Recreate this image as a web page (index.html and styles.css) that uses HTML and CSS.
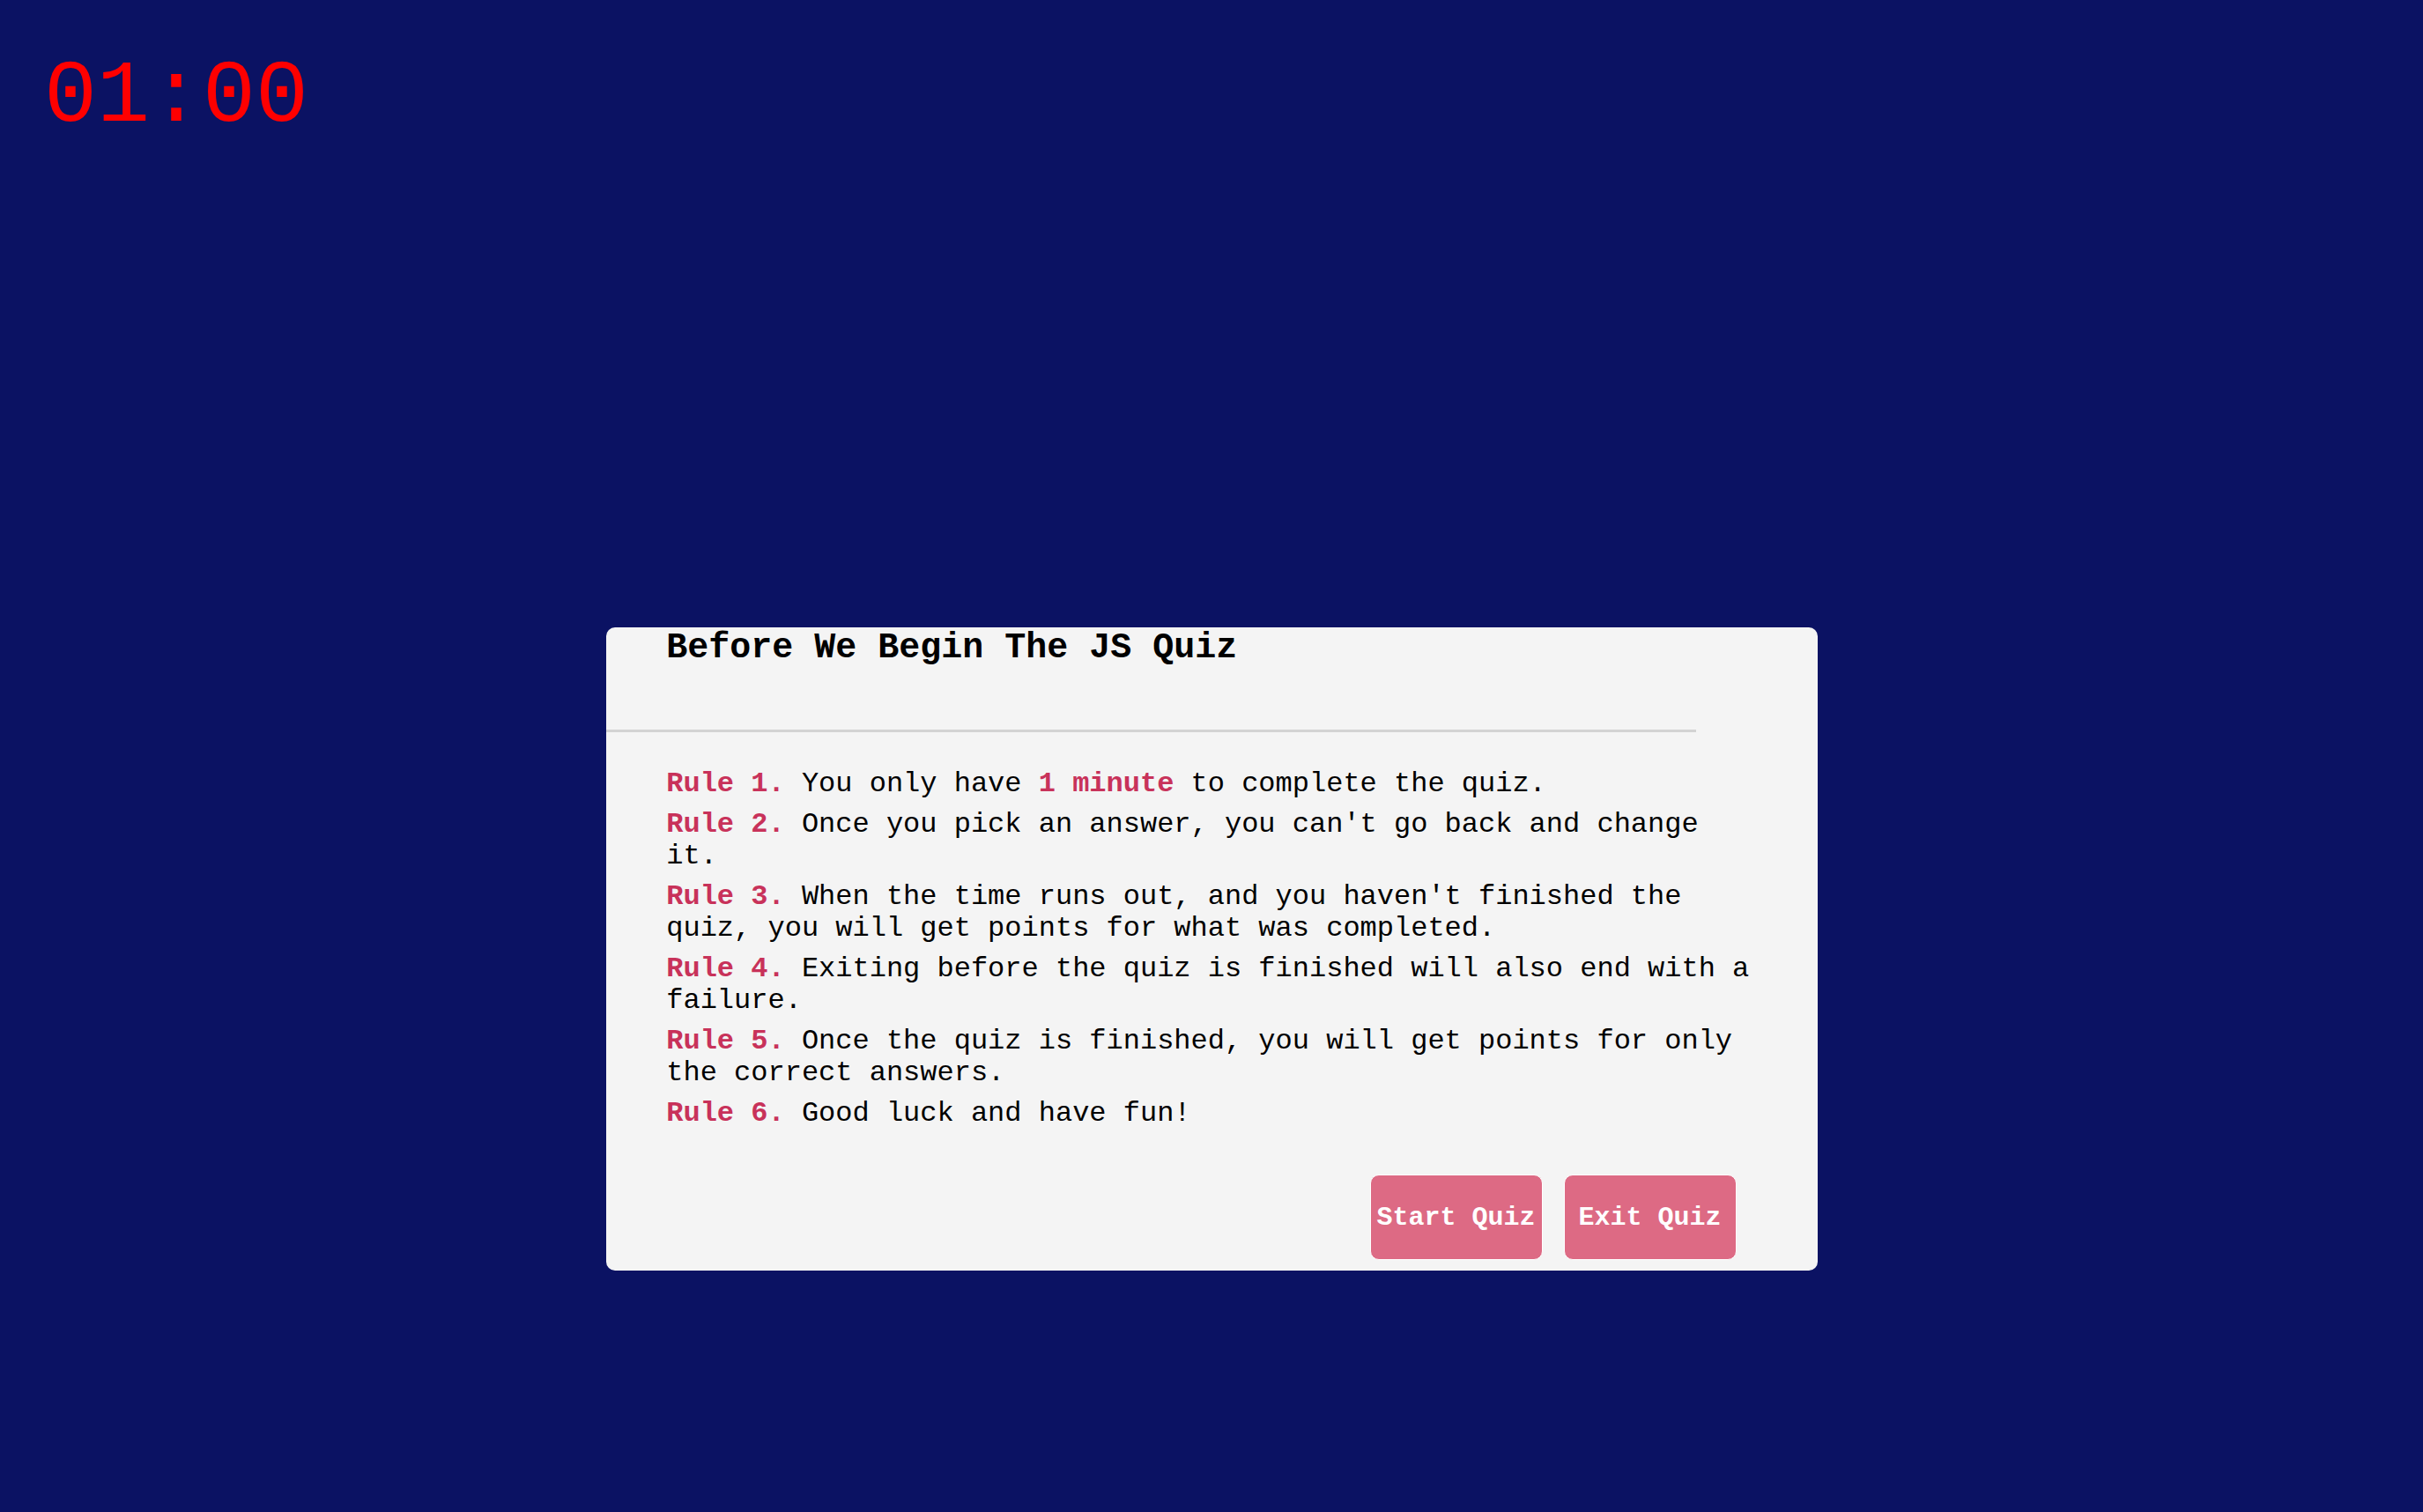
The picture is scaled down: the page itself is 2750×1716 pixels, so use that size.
FILE: index.html
```html
<!DOCTYPE html>
<html lang="en">
<head>
<meta charset="utf-8">
<title>JS Quiz</title>
<link rel="stylesheet" href="styles.css">
</head>
<body>
<div class="timer">01:00</div>
<div class="info-box">
  <div class="info-title">Before We Begin The JS Quiz</div>
  <div class="info-list">
    <div class="rule"><span class="hl">Rule 1.</span> You only have <span class="hl">1 minute</span> to complete the quiz.</div>
    <div class="rule"><span class="hl">Rule 2.</span> Once you pick an answer, you can't go back and change it.</div>
    <div class="rule"><span class="hl">Rule 3.</span> When the time runs out, and you haven't finished the quiz, you will get points for what was completed.</div>
    <div class="rule"><span class="hl">Rule 4.</span> Exiting before the quiz is finished will also end with a failure.</div>
    <div class="rule"><span class="hl">Rule 5.</span> Once the quiz is finished, you will get points for only the correct answers.</div>
    <div class="rule"><span class="hl">Rule 6.</span> Good luck and have fun!</div>
  </div>
  <div class="buttons">
    <button class="btn">Start Quiz</button>
    <button class="btn">Exit Quiz</button>
  </div>
</div>
</body>
</html>
```

FILE: styles.css
```css
html, body {
  margin: 0;
  padding: 0;
}
body {
  background: #0b1263;
  font-family: "Liberation Mono", "Courier New", monospace;
  min-height: 100vh;
}
.timer {
  color: #ff0000;
  font-size: 100px;
  line-height: 113px;
  padding: 54px 0 0 50px;
}
.info-box {
  width: 50%;
  margin: 545px auto 0;
  background: #f4f4f4;
  border-radius: 10px;
  color: #000;
}
.info-title {
  box-sizing: border-box;
  width: 90%;
  padding: 1px 0 70px 5%;
  font-size: 40px;
  line-height: 45px;
  font-weight: bold;
  border-bottom: 3px solid #d3d3d3;
}
.info-list {
  display: flex;
  flex-direction: column;
  gap: 10px;
  padding: 41px 5% 0;
  font-size: 32px;
  line-height: 36px;
}
.hl {
  color: #c8325a;
  font-weight: bold;
}
.buttons {
  display: flex;
  justify-content: flex-end;
  gap: 24px;
  padding: 51px 92px 12px 0;
}
.btn {
  box-sizing: border-box;
  width: 196px;
  height: 97px;
  padding: 0;
  border: 1px solid #ffffff;
  border-radius: 10px;
  background: #dd6a84;
  color: #ffffff;
  font-family: "Liberation Mono", "Courier New", monospace;
  font-weight: bold;
  font-size: 30px;
  text-align: center;
}
```
